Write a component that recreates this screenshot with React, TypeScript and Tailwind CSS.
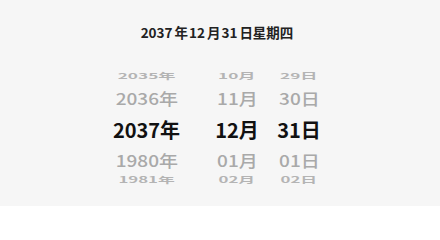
import React from "react";

type Row = { y: string; m: string; d: string; h: string; tx: string; color: string; weight: string };

const rows: Row[] = [
  { y: "2035年", m: "10月", d: "29日", h: "h-[20px]", tx: "scale-x-[0.86] scale-y-[0.4]", color: "text-[#b4b4b4]", weight: "font-semibold" },
  { y: "2036年", m: "11月", d: "30日", h: "h-[24px]", tx: "scale-x-[0.95] scale-y-[0.82]", color: "text-[#a9a9a9]", weight: "font-medium" },
  { y: "2037年", m: "12月", d: "31日", h: "h-[40px]", tx: "", color: "text-[#111111]", weight: "font-bold" },
  { y: "1980年", m: "01月", d: "01日", h: "h-[20px]", tx: "scale-x-[0.95] scale-y-[0.82]", color: "text-[#a9a9a9]", weight: "font-medium" },
  { y: "1981年", m: "02月", d: "02日", h: "h-[20px]", tx: "scale-x-[0.84] scale-y-[0.42]", color: "text-[#b4b4b4]", weight: "font-semibold" },
];

export default function App() {
  const font = { fontFamily: '"Noto Sans CJK SC", "Noto Sans", sans-serif' };
  return (
    <div className="w-[440px] h-[206px] bg-[#f6f6f6] overflow-hidden" style={font}>
      <div className="h-[64px] flex items-start justify-center pt-[22px]">
        <div className="text-[13.5px] leading-[20px] font-bold text-[#222222] pr-[6px] flex">
          <span>2037</span>
          <span className="ml-[2px]">年</span>
          <span className="ml-[1px]">12</span>
          <span className="ml-[2px]">月</span>
          <span className="ml-[1px]">31</span>
          <span className="ml-[2px]">日星期四</span>
        </div>
      </div>
      <div className="flex flex-col pl-[102px] pt-[2px]">
        {rows.map((r, i) => (
          <div key={i} className={`flex ${r.h} items-center text-[20px] leading-none ${r.color} ${r.weight}`}>
            <div className="w-[89px] flex justify-center">
              <span className={`inline-block ${r.tx}`}>{r.y}</span>
            </div>
            <div className="w-[70px] ml-[11px] flex justify-center">
              <span className={`inline-block ${r.tx}`}>{r.m}</span>
            </div>
            <div className="w-[54px] flex justify-center">
              <span className={`inline-block ${r.tx}`}>{r.d}</span>
            </div>
          </div>
        ))}
      </div>
    </div>
  );
}
